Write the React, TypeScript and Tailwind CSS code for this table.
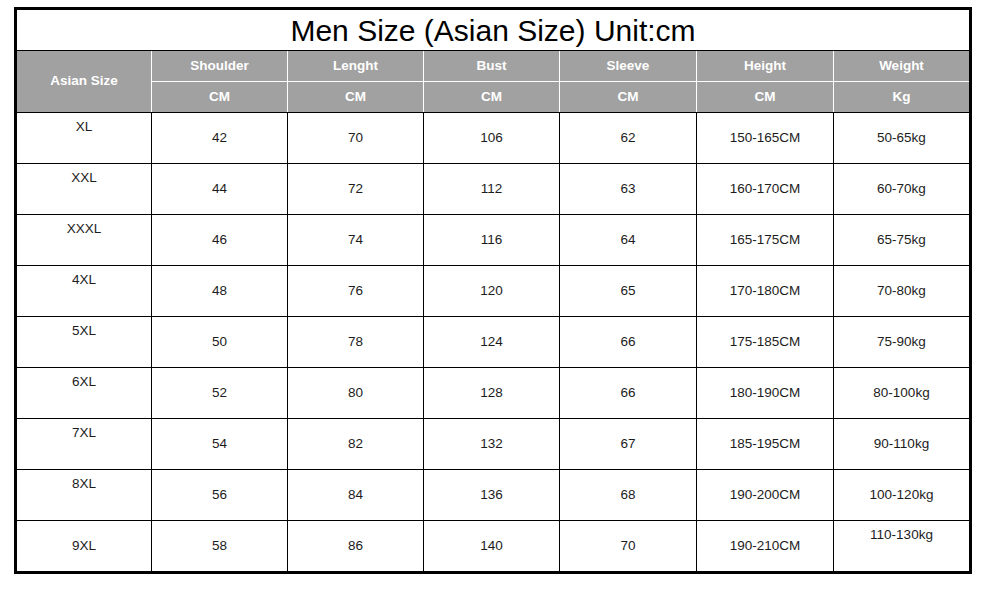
import React from "react";

const rows = [
  ["XL", "42", "70", "106", "62", "150-165CM", "50-65kg"],
  ["XXL", "44", "72", "112", "63", "160-170CM", "60-70kg"],
  ["XXXL", "46", "74", "116", "64", "165-175CM", "65-75kg"],
  ["4XL", "48", "76", "120", "65", "170-180CM", "70-80kg"],
  ["5XL", "50", "78", "124", "66", "175-185CM", "75-90kg"],
  ["6XL", "52", "80", "128", "66", "180-190CM", "80-100kg"],
  ["7XL", "54", "82", "132", "67", "185-195CM", "90-110kg"],
  ["8XL", "56", "84", "136", "68", "190-200CM", "100-120kg"],
  ["9XL", "58", "86", "140", "70", "190-210CM", "110-130kg"],
];

const heads = [
  ["Shoulder", "CM"],
  ["Lenght", "CM"],
  ["Bust", "CM"],
  ["Sleeve", "CM"],
  ["Height", "CM"],
  ["Weight", "Kg"],
];

export default function App() {
  return (
    <div
      className="w-[985px] h-[589px] bg-white pt-[7px] pl-[14px]"
      style={{ fontFamily: '"Liberation Sans", Arial, sans-serif' }}
    >
      <div className="w-[958px] border-[3px] border-black">
        <div className="h-[41px] border-b border-black flex items-center justify-center text-[30px] text-black leading-none pt-[1px]">
          Men Size (Asian Size) Unit:cm
        </div>
        <div className="grid grid-cols-[135px_136px_136px_136px_137px_137px_135px] grid-rows-[31px_30px] bg-[#a1a1a1] text-white font-bold text-[13.5px] border-b border-black">
          <div className="row-span-2 border-r border-white flex items-center justify-center">
            Asian Size
          </div>
          {heads.map((h, i) => (
            <div
              key={"a" + i}
              className={`border-b border-white flex items-center justify-center ${i < 5 ? "border-r" : ""}`}
            >
              {h[0]}
            </div>
          ))}
          {heads.map((h, i) => (
            <div
              key={"b" + i}
              className={`border-white flex items-center justify-center ${i < 5 ? "border-r" : ""}`}
            >
              {h[1]}
            </div>
          ))}
        </div>
        {rows.map((r, ri) => {
          const last = ri === rows.length - 1;
          return (
            <div
              key={ri}
              className={`grid grid-cols-[135px_136px_136px_136px_137px_137px_135px] text-[13.5px] text-[#1c1c1c] ${last ? "h-[50px]" : "h-[51px] border-b border-black"}`}
            >
              {r.map((c, ci) => {
                const top = (ci === 0 && !last) || (ci === 6 && last);
                return (
                  <div
                    key={ci}
                    className={`flex justify-center ${top ? "items-start pt-[4px]" : "items-center"} ${ci < 6 ? "border-r border-black" : ""}`}
                  >
                    {c}
                  </div>
                );
              })}
            </div>
          );
        })}
      </div>
    </div>
  );
}
